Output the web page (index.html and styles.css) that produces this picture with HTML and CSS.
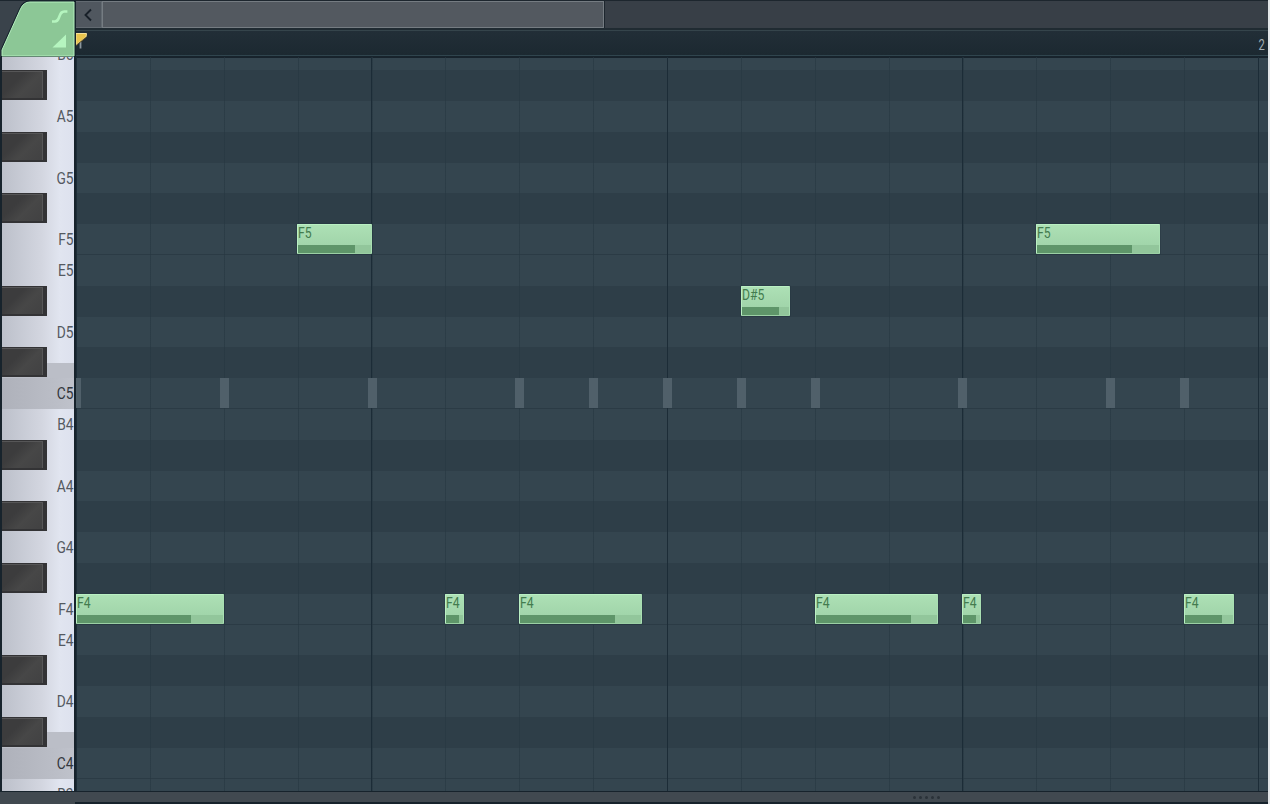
FILE: index.html
```
<!DOCTYPE html>
<html lang="en">
<head>
	<meta charset="utf-8"/>
	<title>Piano roll</title>
	<link rel="stylesheet" href="styles.css">
</head>
<body>

<div id="roll">
	<div class="corner">
		<svg width="76" height="58" viewBox="0 0 76 58">
			<path d="M2 56 V50 L20.500 9 Q23.500 2 30 2 H74.500 V56 Z" fill="#8cc796" stroke="#15222b" stroke-width="3"/>
			<path d="M2 56 V50 L20.500 9 Q23.500 2 30 2 H74 V56 Z" fill="#8cc796" stroke="#b5f0be" stroke-width="1"/>
			<path d="M52 21.500 h3 c3 0 3.200 -2 4.400 -5 c1.200 -3 1.800 -5 5 -5 h3" fill="none" stroke="#b5f5bf" stroke-width="2.600"/>
			<path d="M52.500 47.500 L66 34.500 V47.500 Z" fill="#b5f5bf"/>
		</svg>
	</div>

	<div class="top">
		<div class="scrollbar">
			<div class="arrow"><svg width="26" height="27" viewBox="0 0 26 27"><path d="M15 8.500 L9.500 14 L15 19.500" fill="none" stroke="#182029" stroke-width="1.900"/></svg></div>
			<div class="thumb"></div>
		</div>
		<div class="ruler">
			<svg width="14" height="22" viewBox="0 0 14 22"><path d="M4.500 11 V17.500" stroke="#8b979e" stroke-width="1.800"/><path d="M0 2.500 H10.500 L10 6 L0 14 Z" fill="#e9c44e" stroke="#f7e29b" stroke-width="1"/><path d="M0 14.500 L10.500 6" stroke="#5e4d20" stroke-width="1"/></svg>
			<span>2</span>
		</div>
	</div>

	<div class="keys">
		<div class="key"><span>B5</span></div>
		<div class="key black"></div>
		<div class="key"><span>A5</span></div>
		<div class="key black"></div>
		<div class="key"><span>G5</span></div>
		<div class="key black"></div>
		<div class="key"><span>F5</span></div>
		<div class="key"><span>E5</span></div>
		<div class="key black"></div>
		<div class="key"><span>D5</span></div>
		<div class="key black root-half"></div>
		<div class="key root"><span>C5</span></div>
		<div class="key"><span>B4</span></div>
		<div class="key black"></div>
		<div class="key"><span>A4</span></div>
		<div class="key black"></div>
		<div class="key"><span>G4</span></div>
		<div class="key black"></div>
		<div class="key"><span>F4</span></div>
		<div class="key"><span>E4</span></div>
		<div class="key black"></div>
		<div class="key"><span>D4</span></div>
		<div class="key black root-half"></div>
		<div class="key root"><span>C4</span></div>
		<div class="key"><span>B3</span></div>
	</div>

	<div class="lanes">
		<div class="lane"></div>
		<div class="lane sharp"></div>
		<div class="lane"></div>
		<div class="lane sharp"></div>
		<div class="lane"></div>
		<div class="lane sharp"></div>
		<div class="lane split">
			<div class="note" style="left: 221px; width: 75px"><span>F5</span><i style="width: 57px"></i></div>
			<div class="note" style="left: 960px; width: 124px"><span>F5</span><i style="width: 95px"></i></div>
		</div>
		<div class="lane"></div>
		<div class="lane sharp">
			<div class="note" style="left: 665px; width: 49px"><span>D#5</span><i style="width: 37px"></i></div>
		</div>
		<div class="lane"></div>
		<div class="lane sharp"></div>
		<div class="lane split">
			<div class="ghost" style="left: -4px"></div>
			<div class="ghost" style="left: 143.5px"></div>
			<div class="ghost" style="left: 291.5px"></div>
			<div class="ghost" style="left: 439px"></div>
			<div class="ghost" style="left: 513px"></div>
			<div class="ghost" style="left: 587px"></div>
			<div class="ghost" style="left: 660.5px"></div>
			<div class="ghost" style="left: 735px"></div>
			<div class="ghost" style="left: 882px"></div>
			<div class="ghost" style="left: 1030px"></div>
			<div class="ghost" style="left: 1104px"></div>
		</div>
		<div class="lane"></div>
		<div class="lane sharp"></div>
		<div class="lane"></div>
		<div class="lane sharp"></div>
		<div class="lane"></div>
		<div class="lane sharp"></div>
		<div class="lane split">
			<div class="note" style="left: 0px; width: 148px"><span>F4</span><i style="width: 114px"></i></div>
			<div class="note" style="left: 369px; width: 19px"><span>F4</span><i style="width: 13px"></i></div>
			<div class="note" style="left: 443px; width: 123px"><span>F4</span><i style="width: 95px"></i></div>
			<div class="note" style="left: 739px; width: 123px"><span>F4</span><i style="width: 95px"></i></div>
			<div class="note" style="left: 886px; width: 19px"><span>F4</span><i style="width: 13px"></i></div>
			<div class="note" style="left: 1108px; width: 50px"><span>F4</span><i style="width: 37px"></i></div>
		</div>
		<div class="lane"></div>
		<div class="lane sharp"></div>
		<div class="lane"></div>
		<div class="lane sharp"></div>
		<div class="lane split"></div>
		<div class="lane"></div>
	</div>

	<div class="splitter">
		<div class="grip"><b></b><b></b><b></b><b></b><b></b></div>
	</div>
</div>

</body>
</html>
```
FILE: styles.css
```
body {
	margin: 0;
	background: #e4e7e9;
	font-family: Roboto, "Liberation Sans", sans-serif;
	overflow: hidden;
}

#roll {
	display: grid;
	grid-template-columns: 76px 1fr;
	grid-template-rows: 57px 734px 13px;
	width: 1268px;
	height: 804px;
	background: #17232c;
}

/* top bar */
.corner {
	background: linear-gradient(#1c262e 1px, #3a434b 1px, #3a434b);
	overflow: hidden;
}

.corner svg, .arrow svg, .ruler svg {
	display: block;
}

.scrollbar {
	display: flex;
	height: 27px;
	padding-top: 1px;
	background: #383f47;
	border-bottom: 2px solid #202b32;
	box-shadow: inset 0 1px #1d262e;
}

.arrow {
	box-sizing: border-box;
	width: 26px;
	height: 27px;
	background: #50575f;
	border: 1px solid #626a71;
	border-left: 0;
}

.arrow svg {
	margin-top: -1px;
}

.thumb {
	box-sizing: border-box;
	width: 502px;
	height: 27px;
	background: #535960;
	border: 1px solid #757c82;
	box-shadow: 1px 0 #1d262e;
}

.ruler {
	display: flex;
	justify-content: space-between;
	height: 24px;
	border-top: 1px solid #35444b;
	border-bottom: 1px solid #30454e;
	background: linear-gradient(#222e37, #1c2931);
}

.ruler span {
	margin-right: 3px;
	color: #a4adb3;
	font-size: 14px;
	line-height: 28px;
	transform: scaleX(.8);
	transform-origin: right;
}

/* keyboard */
.keys, .lanes {
	display: flex;
	flex-direction: column;
	justify-content: flex-end;
	overflow: hidden;
}

.keys {
	margin: 0 2px 0 1.5px;
	background: linear-gradient(90deg, #bcc0ca, #d3d6e0 40px, #e1e5f0 58px, #dde1ee);
}

.key {
	flex: none;
	box-sizing: border-box;
	height: 30.8px;
	padding-right: 1px;
	text-align: right;
}

.key span {
	display: block;
	color: #545961;
	font-size: 16px;
	line-height: 32px;
	transform: scaleX(.86);
	transform-origin: right;
}

.key.black::before {
	content: "";
	display: block;
	box-sizing: border-box;
	width: 45.5px;
	height: 30px;
	border: solid #333335;
	border-width: 1px 4px 2px 0;
	background: linear-gradient(135deg, #3c3c3d 35%, #474747 60%, #414142);
	box-shadow: inset -1px 1px #565657;
}

.key.root {
	background: linear-gradient(90deg, #aeb1ba, #bfc2cb);
}

.key.root span {
	color: #33373d;
}

.key.root-half {
	background: linear-gradient(transparent 50%, #bbbec7 50%);
}

/* the last key and the last lane are cut by the splitter */
.key:last-child, .lane:last-child {
	height: 12.4px;
}

/* note lanes */
.lanes {
	position: relative;
	background: #34454f;
	box-shadow: inset 0 1px #17232c;
}

.lane {
	position: relative;
	flex: none;
	box-sizing: border-box;
	height: 30.8px;
}

.lane.sharp {
	background: #2e3e48;
}

.lane.split {
	border-bottom: 1px solid #2b3b45;
}

/* step and beat lines */
.lanes::before {
	content: "";
	position: absolute;
	top: 0;
	right: 0;
	bottom: 0;
	left: -.5px;
	z-index: 1;
	background:
		repeating-linear-gradient(90deg, #1c2c37 0 1px, transparent 1px 295.5px),
		repeating-linear-gradient(90deg, #26374199 0 1px, transparent 1px 73.88px);
}

.note {
	position: absolute;
	z-index: 2;
	top: 0;
	box-sizing: border-box;
	height: 30px;
	border: 1px solid #b7edc0;
	border-color: #baf0c3 #a9dfb2 #9bd0a4 #baf0c3;
	border-radius: 1px;
	background: linear-gradient(#ade0b5 0, #a1d5aa 20px, #92c69b 20px, #92c69b);
	box-shadow: 0 0 0 1px #24353e66;
}

.note span {
	display: block;
	height: 20px;
	color: #437b4e;
	font-size: 14.5px;
	line-height: 17px;
	transform: scaleX(.84);
	transform-origin: left;
}

.note i {
	display: block;
	height: 8px;
	background: #5e9569;
}

.ghost {
	position: absolute;
	z-index: 2;
	top: 0;
	width: 9px;
	height: 30px;
	background: #50606a;
}

/* bottom bar */
.splitter {
	grid-column: 1 / 3;
	display: flex;
	justify-content: flex-end;
	box-sizing: border-box;
	border-top: 1px solid #17232c;
	background: linear-gradient(#17232c, #17232c) 75px 10px / 100% 2px no-repeat, #414950;
}

.grip {
	display: flex;
	gap: 3px;
	margin: 4px 328px 0 0;
}

.grip b {
	width: 3px;
	height: 3px;
	border-radius: 50%;
	background: #2a3239;
}
```
